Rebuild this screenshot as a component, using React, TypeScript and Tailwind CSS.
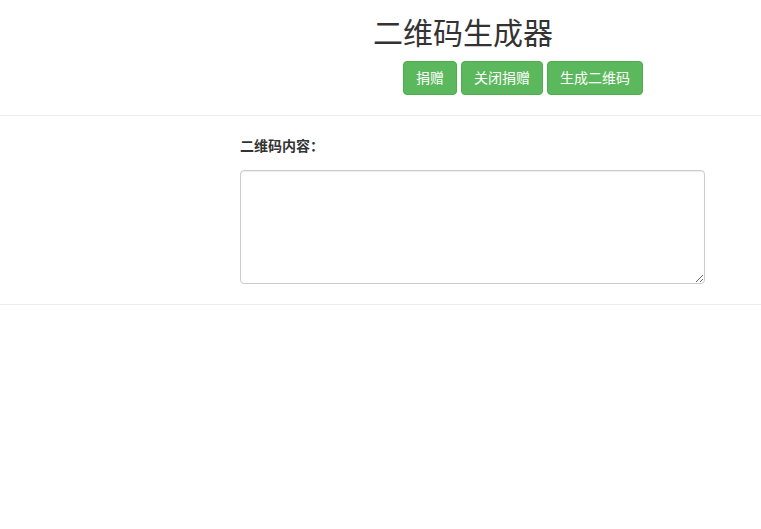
import React from 'react';

// QR code generator page: header with title + actions, then the content form

const font = { fontFamily: '"Liberation Sans", "Noto Sans CJK SC", sans-serif' };

function GreenButton({ children }: { children: React.ReactNode }) {
  return (
    <button className="px-3 py-1.5 text-sm leading-5 text-white bg-[#5cb85c] border border-[#4cae4c] rounded">
      {children}
    </button>
  );
}

export default function App() {
  return (
    <div className="min-h-screen bg-white text-[#333]" style={font}>
      {/* Header */}
      <div className="border-b border-[#eee] pt-[17px] pb-[20px]">
        <h1 className="ml-[373px] text-[30px] leading-[33px] font-normal text-[#333]">二维码生成器</h1>
        <div className="ml-[403px] mt-[11px] flex gap-1">
          <GreenButton>捐赠</GreenButton>
          <GreenButton>关闭捐赠</GreenButton>
          <GreenButton>生成二维码</GreenButton>
        </div>
      </div>

      {/* Content */}
      <div className="border-b border-[#eee] pl-[240px] pr-[56px] pt-[20px] pb-[20px]">
        <label className="block text-sm leading-5 font-bold text-[#333]">二维码内容：</label>
        <textarea className="block mt-[14px] w-[465px] h-[114px] border border-[#ccc] rounded shadow-[inset_0_1px_1px_rgba(0,0,0,0.075)] outline-none resize-y" />
      </div>
    </div>
  );
}
